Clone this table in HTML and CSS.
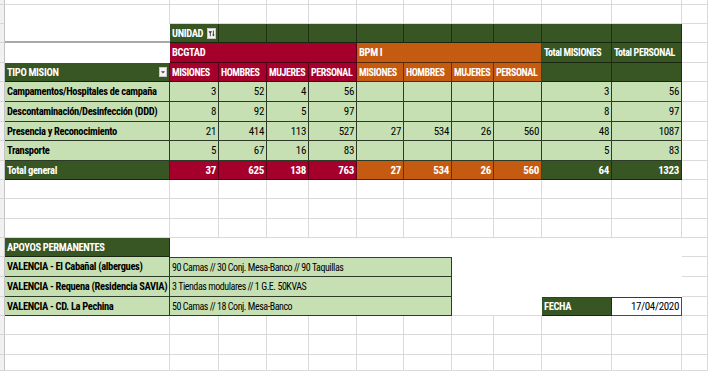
FILE: index.html
```html
<!DOCTYPE html>
<html lang="es">
<head>
<meta charset="utf-8">
<title>Apoyos</title>
<link rel="stylesheet" href="styles.css">
</head>
<body>
<div class="sheet">
  <!-- row 1 -->
  <div class="c g"></div><div class="c"></div><div class="c"></div><div class="c"></div><div class="c"></div><div class="c"></div><div class="c"></div><div class="c"></div><div class="c"></div><div class="c"></div><div class="c"></div><div class="c"></div><div class="c"></div>
  <!-- row 2 -->
  <div class="c g"></div><div class="c nbot"></div><div class="c"></div><div class="c"></div><div class="c"></div><div class="c"></div><div class="c"></div><div class="c"></div><div class="c"></div><div class="c"></div><div class="c"></div><div class="c"></div><div class="c"></div>
  <!-- row 3 UNIDAD -->
  <div class="c g"></div>
  <div class="c pivot-line"></div>
  <div class="c dg b">UNIDAD<span class="filter"><svg width="9" height="11" viewBox="0 0 9 11"><rect x="0.5" y="0.5" width="8" height="10" fill="#f4f4f4" stroke="#c9c9c9"/><path d="M1.6 3.2h3.4L3.7 5.4v3.2l-0.8-0.5V5.4z" fill="#333"/><path d="M6.4 2.6v5.2" stroke="#333" stroke-width="0.9"/><path d="M5.2 6.6l1.2 1.8 1.2-1.8z" fill="#333"/></svg></span></div>
  <div class="c dg"></div><div class="c dg"></div><div class="c dg"></div><div class="c dg"></div><div class="c dg"></div><div class="c dg"></div><div class="c dg"></div><div class="c dg"></div><div class="c dg"></div>
  <div class="c"></div>
  <!-- row 4 BCGTAD -->
  <div class="c g"></div>
  <div class="c nb"></div>
  <div class="c rd b span4">BCGTAD</div>
  <div class="c or b span4">BPM I</div>
  <div class="c dg b hd">Total MISIONES</div>
  <div class="c dg b hd">Total PERSONAL</div>
  <div class="c"></div>
  <!-- row 5 headers -->
  <div class="c g"></div>
  <div class="c dg b between">TIPO MISION<span class="dropdown"><svg width="8" height="10" viewBox="0 0 8 10"><rect x="0.5" y="0.5" width="7" height="9" fill="#f4f4f4" stroke="#c9c9c9"/><path d="M2 4.2h4L4 6.6z" fill="#444"/></svg></span></div>
  <div class="c rd b hd">MISIONES</div><div class="c rd b hd">HOMBRES</div><div class="c rd b hd">MUJERES</div><div class="c rd b hd">PERSONAL</div>
  <div class="c or b hd">MISIONES</div><div class="c or b hd">HOMBRES</div><div class="c or b hd">MUJERES</div><div class="c or b hd">PERSONAL</div>
  <div class="c dg"></div><div class="c dg"></div>
  <div class="c"></div>
  <!-- row 6 -->
  <div class="c g"></div>
  <div class="c lg b">Campamentos/Hospitales de campaña</div>
  <div class="c lg r">3</div><div class="c lg r">52</div><div class="c lg r">4</div><div class="c lg r">56</div>
  <div class="c lg r"></div><div class="c lg r"></div><div class="c lg r"></div><div class="c lg r"></div>
  <div class="c lg r">3</div><div class="c lg r">56</div>
  <div class="c"></div>
  <!-- row 7 -->
  <div class="c g"></div>
  <div class="c lg b">Descontaminación/Desinfección (DDD)</div>
  <div class="c lg r">8</div><div class="c lg r">92</div><div class="c lg r">5</div><div class="c lg r">97</div>
  <div class="c lg r"></div><div class="c lg r"></div><div class="c lg r"></div><div class="c lg r"></div>
  <div class="c lg r">8</div><div class="c lg r">97</div>
  <div class="c"></div>
  <!-- row 8 -->
  <div class="c g"></div>
  <div class="c lg b">Presencia y Reconocimiento</div>
  <div class="c lg r">21</div><div class="c lg r">414</div><div class="c lg r">113</div><div class="c lg r">527</div>
  <div class="c lg r">27</div><div class="c lg r">534</div><div class="c lg r">26</div><div class="c lg r">560</div>
  <div class="c lg r">48</div><div class="c lg r">1087</div>
  <div class="c"></div>
  <!-- row 9 -->
  <div class="c g"></div>
  <div class="c lg b">Transporte</div>
  <div class="c lg r">5</div><div class="c lg r">67</div><div class="c lg r">16</div><div class="c lg r">83</div>
  <div class="c lg r"></div><div class="c lg r"></div><div class="c lg r"></div><div class="c lg r"></div>
  <div class="c lg r">5</div><div class="c lg r">83</div>
  <div class="c"></div>
  <!-- row 10 total -->
  <div class="c g"></div>
  <div class="c dg b">Total general</div>
  <div class="c rd b r">37</div><div class="c rd b r">625</div><div class="c rd b r">138</div><div class="c rd b r">763</div>
  <div class="c or b r">27</div><div class="c or b r">534</div><div class="c or b r">26</div><div class="c or b r">560</div>
  <div class="c dg b r">64</div><div class="c dg b r">1323</div>
  <div class="c"></div>
  <!-- rows 11-13 -->
  <div class="c g"></div><div class="c"></div><div class="c"></div><div class="c"></div><div class="c"></div><div class="c"></div><div class="c"></div><div class="c"></div><div class="c"></div><div class="c"></div><div class="c"></div><div class="c"></div><div class="c"></div>
  <div class="c g"></div><div class="c"></div><div class="c"></div><div class="c"></div><div class="c"></div><div class="c"></div><div class="c"></div><div class="c"></div><div class="c"></div><div class="c"></div><div class="c"></div><div class="c"></div><div class="c"></div>
  <div class="c g"></div><div class="c"></div><div class="c"></div><div class="c"></div><div class="c"></div><div class="c"></div><div class="c"></div><div class="c"></div><div class="c"></div><div class="c"></div><div class="c"></div><div class="c"></div><div class="c"></div>
  <!-- row 14 APOYOS -->
  <div class="c g"></div>
  <div class="c dg b">APOYOS PERMANENTES</div>
  <div class="c nb span10"></div>
  <div class="c"></div>
  <!-- row 15 -->
  <div class="c g"></div>
  <div class="c lg b">VALENCIA - El Cabañal (albergues)</div>
  <div class="c lg span6 top txt">90 Camas // 30 Conj. Mesa-Banco // 90 Taquillas</div>
  <div class="c nb span4"></div>
  <div class="c"></div>
  <!-- row 16 -->
  <div class="c g"></div>
  <div class="c lg b">VALENCIA - Requena (Residencia SAVIA)</div>
  <div class="c lg span6 txt">3 Tiendas modulares // 1 G.E. 50KVAS</div>
  <div class="c nb span4"></div>
  <div class="c"></div>
  <!-- row 17 -->
  <div class="c g"></div>
  <div class="c lg b">VALENCIA - CD. La Pechina</div>
  <div class="c lg span6 txt">50 Camas // 18 Conj. Mesa-Banco</div>
  <div class="c nr span2"></div>
  <div class="c dg b top">FECHA</div>
  <div class="c date r top">17/04/2020</div>
  <div class="c"></div>
  <!-- rows 18-20 -->
  <div class="c g"></div><div class="c"></div><div class="c"></div><div class="c"></div><div class="c"></div><div class="c"></div><div class="c"></div><div class="c"></div><div class="c"></div><div class="c"></div><div class="c"></div><div class="c"></div><div class="c"></div>
  <div class="c g"></div><div class="c"></div><div class="c"></div><div class="c"></div><div class="c"></div><div class="c"></div><div class="c"></div><div class="c"></div><div class="c"></div><div class="c"></div><div class="c"></div><div class="c"></div><div class="c"></div>
  <div class="c g"></div><div class="c"></div><div class="c"></div><div class="c"></div><div class="c"></div><div class="c"></div><div class="c"></div><div class="c"></div><div class="c"></div><div class="c"></div><div class="c"></div><div class="c"></div><div class="c"></div>
</div>
</body>
</html>
```
FILE: styles.css
```css
html, body {
  margin: 0;
  padding: 0;
  background: #ffffff;
}

.sheet {
  display: grid;
  grid-template-columns: 5px 165px 49px 48px 42px 48px 47px 48px 42px 48px 70px 70px 26px;
  grid-template-rows: 5px 19px 19px 20px 19px 20px 20px 19px 20px 19px 19px 20px 19px 19px 20px 20px 19px 19px 20px 16px;
  width: 708px;
  height: 371px;
  overflow: hidden;
  font-family: "Liberation Sans Narrow", "Arial Narrow", "Roboto Condensed", "Carlito", "Roboto", sans-serif;
  font-size: 10.5px;
  letter-spacing: -0.35px;
  color: #000000;
}

.c {
  box-sizing: border-box;
  min-width: 0;
  display: flex;
  align-items: center;
  padding: 0 2px 0 2px;
  white-space: nowrap;
  overflow: hidden;
  border-right: 1px solid #dadada;
  border-bottom: 1px solid #dadada;
}

.g {
  padding: 0;
  background: #f1f1f1;
  border-right-color: #c4c4c4;
  border-bottom-color: #d6d6d6;
}

.nbot { border-bottom: none; }
.nb { border-right: none; border-bottom: none; }
.nr { border-right: none; }

.pivot-line {
  border-right: none;
  border-bottom: 2px solid #a9a9a9;
}

.b { font-weight: bold; }
.r { justify-content: flex-end; font-size: 11px; }
.between { justify-content: space-between; }
.top { border-top: 1px solid #3a3a3a; }

.hd {
  font-size: 10px;
  letter-spacing: -0.4px;
  padding: 0 1px 0 2px;
}

.txt {
  font-size: 10px;
  letter-spacing: -0.45px;
}

.dg, .rd, .or {
  color: #ffffff;
  border-right-color: rgba(0, 0, 0, 0.45);
  border-bottom-color: rgba(0, 0, 0, 0.55);
}
.dg { background: #375623; }
.rd { background: #a5002b; }
.or { background: #c55a11; }

.lg {
  background: #c6e0b4;
  border-right-color: #2e3a28;
  border-bottom-color: #2e3a28;
}

.date {
  background: #ffffff;
  border-right-color: #4a4a4a;
  border-bottom-color: #4a4a4a;
}

.span2 { grid-column: span 2; }
.span4 { grid-column: span 4; }
.span6 { grid-column: span 6; }
.span10 { grid-column: span 10; }

.filter {
  display: flex;
  margin-left: 4px;
}

.dropdown {
  display: flex;
  margin-right: 0;
}
```
